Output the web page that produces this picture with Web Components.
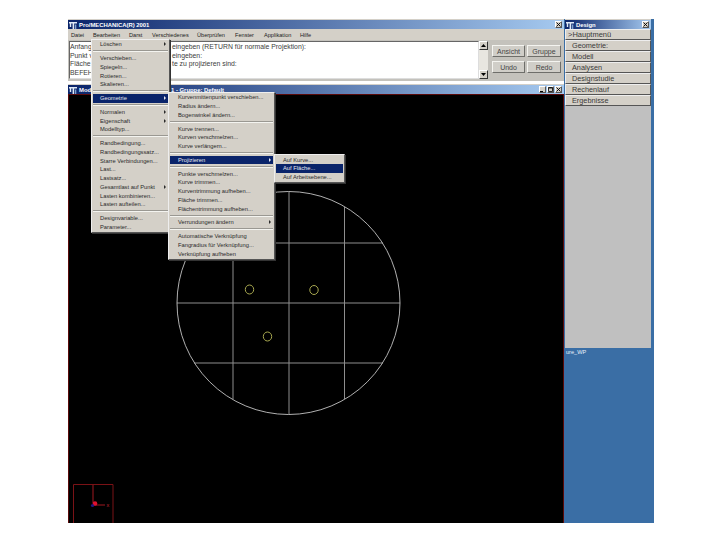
<!DOCTYPE html>
<html>
<head>
<meta charset="utf-8">
<title>Pro/MECHANICA</title>
<style>
  html, body { margin: 0; padding: 0; background: #fff; }
  body { font-family: "Liberation Sans", Arial, sans-serif; }
  /* the windows sit on a free desktop, so these are the only coordinates */
  #main { left: 0; top: 0; width: 496px; height: 62px; }
  #model { left: 0; top: 65px; width: 496px; height: 439px; }
  #design { left: 497px; top: 0; width: 86px; height: 329px; }
  #menu1 { left: 23px; top: 20px; width: 79px; --item-pad: 8px; }
  #menu2 { left: 100px; top: 73px; width: 107px; }
  #menu3 { left: 206px; top: 135.25px; width: 71px; --item-pad: 8px; }
</style>
</head>
<body>
<template id="tpl-desktop">
  <style>
    :host { display: block; position: relative; width: 586px; height: 504px; margin: 19px 0 0 68px;
      background: linear-gradient(#fff, #fff) 0 0 / 496px 100% no-repeat, #3a6ea5; overflow: hidden; }
    .wp { position: absolute; left: 498px; top: 330px; color: #e6effa; font-size: 5.6px; }
  </style>
  <span class="wp">ure_WP</span>
  <slot></slot>
</template>

<template id="tpl-window">
  <style>
    :host { display: flex; flex-direction: column; position: absolute; box-sizing: border-box;
      background: #d4d0c8; padding-top: 1px; }
    .bar { flex: none; height: 9px; display: flex; align-items: center; gap: 2px; padding: 0 2px 0 1px;
      background: linear-gradient(90deg, #0a246a, #a6caf0); color: #fff; font-size: 5.9px; font-weight: bold; }
    .bar svg { flex: none; }
    .title { flex: 1; white-space: nowrap; display: flex; }
    .ctl { flex: none; display: flex; gap: 1px; }
    .ctl span { width: 7px; height: 7px; box-sizing: border-box; background: #d4d0c8; color: #000;
      border: 1px solid; border-color: #fff #555 #555 #fff; display: flex; }
    .ctl svg { width: 5px; height: 5px; }
  </style>
  <div class="bar">
    <svg width="8" height="8" viewBox="0 0 8 8"><path d="M0 1h8v1.4H5.2V8H3.6V2.4H2.2V6H.8V2.4H0z" fill="#dfe9f5"/><path d="M6 3.4h1.3V8H6z" fill="#7fa2d0"/></svg>
    <div class="title"><slot name="title"></slot></div>
    <div class="ctl"></div>
  </div>
  <slot></slot>
</template>

<template id="tpl-menubar">
  <style>
    :host { display: grid; flex: none; height: 11px; align-items: center; padding-left: 3px;
      grid-template-columns: 22px 36px 23px 45px 38px 29px 36px auto;
      font-size: 5.6px; color: #222; white-space: nowrap; }
  </style>
  <slot></slot>
</template>

<template id="tpl-console">
  <style>
    :host { display: flex; flex: 1; min-height: 0; background: #c4c2bc; }
    .log { width: 410px; flex: none; box-sizing: border-box; margin: 1px 0 2px 1px; padding: 1px 0 0 0; background: #fff;
      border: 1px solid; border-color: #666 #ddd #ddd #666; font-size: 6.85px; line-height: 8.7px; color: #3c3c3c; overflow: hidden; }
    .scroll { flex: none; width: 9px; margin: 1px 0 2px; display: flex; flex-direction: column; justify-content: space-between;
      background: #e8e6e0; }
    .scroll span { box-sizing: border-box; height: 9px; background: #d4d0c8; border: 1px solid; border-color: #fff #333 #333 #fff;
      display: flex; align-items: center; justify-content: center; }
    .grid { flex: 1; display: grid; grid-template-columns: 33px 34px; grid-auto-rows: 12px; gap: 4px 2px; padding: 5px 0 0 4px; }
  </style>
  <div class="log"><slot></slot></div>
  <div class="scroll">
    <span><svg width="5" height="3"><path d="M2.5 0L5 3H0z" fill="#000"/></svg></span>
    <span><svg width="5" height="3"><path d="M0 0h5L2.5 3z" fill="#000"/></svg></span>
  </div>
  <div class="grid"><slot name="buttons"></slot></div>
</template>

<template id="tpl-log-line">
  <style>
    :host { display: grid; grid-template-columns: 102px auto; white-space: nowrap; }
  </style>
  <slot></slot>
</template>

<template id="tpl-cad-button">
  <style>
    :host { display: flex; align-items: center; justify-content: center; box-sizing: border-box;
      background: #d0cec8; border: 1px solid; border-color: #f4f4f0 #6e6e6a #6e6e6a #f4f4f0;
      font-size: 7px; color: #444; }
  </style>
  <slot></slot>
</template>

<template id="tpl-side-button">
  <style>
    :host { display: flex; align-items: center; box-sizing: border-box; height: 11px; padding-left: 6px;
      background: #d4d0c8; border: 1px solid; border-color: #eee #555 #555 #eee;
      font-size: 7.3px; color: #3a3a3a; white-space: nowrap; }
    :host([open]) { padding-left: 2px; font-size: 7.5px; }
  </style>
  <slot></slot>
</template>

<template id="tpl-side-list">
  <style>
    :host { display: flex; flex-direction: column; flex: 1; background: #c0c0c0; }
  </style>
  <slot></slot>
</template>

<template id="tpl-menu">
  <style>
    :host { display: flex; flex-direction: column; position: absolute; box-sizing: border-box; z-index: 5;
      background: #d4d0c8; border: 1px solid; border-color: #eee #555 #555 #eee; padding-bottom: .5px;
      box-shadow: 1px 1px 0 #333; font-size: 5.75px; color: #2a2a2a; white-space: nowrap; }
  </style>
  <slot></slot>
</template>

<template id="tpl-menu-item">
  <style>
    :host { display: flex; align-items: center; justify-content: space-between; height: 8.75px;
      padding: 0 3px 0 var(--item-pad, 9px); }
    :host([active]) { background: #0a246a; color: #e8e8f0; margin: 0 1px; padding-left: calc(var(--item-pad, 9px) - 1px); padding-right: 2px; }
    svg { display: none; }
    :host([arrow]) svg { display: block; }
  </style>
  <slot></slot>
  <svg width="2" height="4" viewBox="0 0 2 4"><path d="M0 0l2 2-2 2z" fill="currentColor"/></svg>
</template>

<template id="tpl-menu-sep">
  <style>
    :host { display: flex; align-items: center; height: 5px; padding: 0 1px; }
    i { flex: 1; height: 1px; background: #9a9892; border-bottom: .5px solid #f4f4f0; }
  </style>
  <i></i>
</template>

<template id="tpl-cad-view">
  <style>
    :host { display: block; flex: 1; min-height: 0; background: #000; border: 1px solid #5a0a0a; border-bottom: 0; box-sizing: border-box; }
    svg { display: block; width: 100%; height: 100%; }
    text { font: 5.5px "Liberation Sans", sans-serif; fill: #c02030; }
  </style>
  <!-- viewBox is in screen pixels so the numbers read straight off the reference -->
  <svg viewBox="69 95 494 428" fill="none">
    <g stroke="#8e8e8e" stroke-width="1">
      <path d="M233 207V399M289 191.500V414.500M344.500 207V399"/>
      <path d="M194 243H383M177 303H400M194 363H383"/>
    </g>
    <circle cx="288.500" cy="303" r="111.500" stroke="#c4c4c4" stroke-width=".9"/>
    <g stroke="#a8a850" stroke-width="1">
      <ellipse cx="249.500" cy="289.500" rx="4.200" ry="4.500"/>
      <ellipse cx="314" cy="290" rx="4.200" ry="4.500"/>
      <ellipse cx="267.500" cy="336.500" rx="4.200" ry="4.500"/>
    </g>
    <path d="M73.500 523V484.500H113V523" stroke="#7a1216"/>
    <path d="M93 485V503M93 505H105" stroke="#a01820"/>
    <circle cx="95" cy="503.500" r="2.300" fill="#e01030"/>
    <circle cx="92.500" cy="505.500" r="1.600" fill="#201880"/>
    <text x="106.500" y="507">x</text>
  </svg>
</template>

<script>
  // small helper, every element here is just a template in an open shadow root
  function define(name, tplId, setup) {
    customElements.define(name, class extends HTMLElement {
      connectedCallback() {
        if (this.shadowRoot) return;
        const root = this.attachShadow({ mode: "open" });
        root.appendChild(document.getElementById(tplId).content.cloneNode(true));
        if (setup) setup(this, root);
      }
    });
  }

  const ctlIcons = {
    min: '<svg viewBox="0 0 5 5"><path d="M0 4h3v1H0z" fill="#000"/></svg>',
    max: '<svg viewBox="0 0 5 5"><path d="M.5.5h4v4h-4zM.5 1h4" fill="none" stroke="#000" stroke-width=".8"/></svg>',
    close: '<svg viewBox="0 0 5 5"><path d="M.5.5l4 4M4.500.5l-4 4" stroke="#000" stroke-width=".9"/></svg>'
  };

  define("cad-desktop", "tpl-desktop");
  define("cad-window", "tpl-window", (el, root) => {
    const names = (el.getAttribute("controls") || "close").split(" ");
    root.querySelector(".ctl").innerHTML = names.map(n => "<span>" + ctlIcons[n] + "</span>").join("");
  });
  define("cad-menubar", "tpl-menubar");
  define("cad-console", "tpl-console");
  define("log-line", "tpl-log-line");
  define("cad-button", "tpl-cad-button");
  define("side-list", "tpl-side-list");
  define("side-button", "tpl-side-button");
  define("pop-menu", "tpl-menu");
  define("menu-item", "tpl-menu-item");
  define("menu-sep", "tpl-menu-sep");
  define("cad-view", "tpl-cad-view");
</script>

<cad-desktop>
  <cad-window id="main">
    <span slot="title">Pro/MECHANICA(R) 2001</span>
    <cad-menubar>
      <span>Datei</span><span>Bearbeiten</span><span>Darst</span><span>Verschiedenes</span><span>Überprüfen</span><span>Fenster</span><span>Applikation</span><span>Hilfe</span>
    </cad-menubar>
    <cad-console>
      <log-line><span>Anfang</span><span>eingeben (RETURN für normale Projektion):</span></log-line>
      <log-line><span>Punkt v</span><span>eingeben:</span></log-line>
      <log-line><span>Fläche</span><span>te zu projizieren sind:</span></log-line>
      <log-line><span>BEFEHL:</span></log-line>
      <cad-button slot="buttons">Ansicht</cad-button>
      <cad-button slot="buttons">Gruppe</cad-button>
      <cad-button slot="buttons">Undo</cad-button>
      <cad-button slot="buttons">Redo</cad-button>
    </cad-console>
  </cad-window>

  <cad-window id="model" controls="min max close">
    <span slot="title" style="display:flex"><span style="width:92px">Mod</span><span>1 - Gruppe: Default</span></span>
    <cad-view></cad-view>
  </cad-window>

  <cad-window id="design">
    <span slot="title">Design</span>
    <side-list>
      <side-button open>&gt;Hauptmenü</side-button>
      <side-button>Geometrie:</side-button>
      <side-button>Modell</side-button>
      <side-button>Analysen</side-button>
      <side-button>Designstudie</side-button>
      <side-button>Rechenlauf</side-button>
      <side-button>Ergebnisse</side-button>
    </side-list>
  </cad-window>

  <pop-menu id="menu1">
    <menu-item arrow>Löschen</menu-item>
    <menu-sep></menu-sep>
    <menu-item>Verschieben...</menu-item>
    <menu-item>Spiegeln...</menu-item>
    <menu-item>Rotieren...</menu-item>
    <menu-item>Skalieren...</menu-item>
    <menu-sep></menu-sep>
    <menu-item active arrow>Geometrie</menu-item>
    <menu-sep></menu-sep>
    <menu-item arrow>Normalen</menu-item>
    <menu-item arrow>Eigenschaft</menu-item>
    <menu-item>Modelltyp...</menu-item>
    <menu-sep></menu-sep>
    <menu-item>Randbedingung...</menu-item>
    <menu-item>Randbedingungssatz...</menu-item>
    <menu-item>Starre Verbindungen...</menu-item>
    <menu-item>Last...</menu-item>
    <menu-item>Lastsatz...</menu-item>
    <menu-item arrow>Gesamtlast auf Punkt</menu-item>
    <menu-item>Lasten kombinieren...</menu-item>
    <menu-item>Lasten aufteilen...</menu-item>
    <menu-sep></menu-sep>
    <menu-item>Designvariable...</menu-item>
    <menu-item>Parameter...</menu-item>
  </pop-menu>

  <pop-menu id="menu2">
    <menu-item>Kurvenmittenpunkt verschieben...</menu-item>
    <menu-item>Radius ändern...</menu-item>
    <menu-item>Bogenwinkel ändern...</menu-item>
    <menu-sep></menu-sep>
    <menu-item>Kurve trennen...</menu-item>
    <menu-item>Kurven verschmelzen...</menu-item>
    <menu-item>Kurve verlängern...</menu-item>
    <menu-sep></menu-sep>
    <menu-item active arrow>Projizieren</menu-item>
    <menu-sep></menu-sep>
    <menu-item>Punkte verschmelzen...</menu-item>
    <menu-item>Kurve trimmen...</menu-item>
    <menu-item>Kurventrimmung aufheben...</menu-item>
    <menu-item>Fläche trimmen...</menu-item>
    <menu-item>Flächentrimmung aufheben...</menu-item>
    <menu-sep></menu-sep>
    <menu-item arrow>Verrundungen ändern</menu-item>
    <menu-sep></menu-sep>
    <menu-item>Automatische Verknüpfung</menu-item>
    <menu-item>Fangradius für Verknüpfung...</menu-item>
    <menu-item>Verknüpfung aufheben</menu-item>
  </pop-menu>

  <pop-menu id="menu3">
    <menu-item>Auf Kurve...</menu-item>
    <menu-item active>Auf Fläche...</menu-item>
    <menu-item>Auf Arbeitsebene...</menu-item>
  </pop-menu>
</cad-desktop>
</body>
</html>
